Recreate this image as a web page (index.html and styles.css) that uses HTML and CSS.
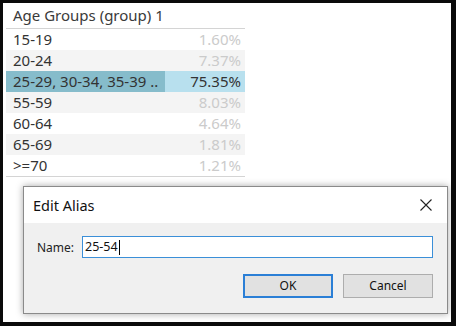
FILE: index.html
```html
<!DOCTYPE html>
<html>
<head>
<meta charset="utf-8">
<link rel="stylesheet" href="styles.css">
</head>
<body>
<div class="frame">
  <div class="table">
    <div class="head">Age Groups (group) 1</div>
    <div class="row"><span class="name">15-19</span><span class="pct">1.60%</span></div>
    <div class="row alt"><span class="name">20-24</span><span class="pct">7.37%</span></div>
    <div class="row sel"><span class="name">25-29, 30-34, 35-39 ..</span><span class="pct">75.35%</span></div>
    <div class="row alt"><span class="name">55-59</span><span class="pct">8.03%</span></div>
    <div class="row"><span class="name">60-64</span><span class="pct">4.64%</span></div>
    <div class="row alt"><span class="name">65-69</span><span class="pct">1.81%</span></div>
    <div class="row"><span class="name">&gt;=70</span><span class="pct">1.21%</span></div>
  </div>

  <div class="dialog">
    <div class="titlebar">
      <span class="title">Edit Alias</span>
      <svg class="close" width="12" height="12" viewBox="0 0 12 12"><path d="M0.5 0.5 L11.5 11.5 M11.5 0.5 L0.5 11.5" stroke="#222" stroke-width="1.1" fill="none"/></svg>
    </div>
    <div class="body">
      <div class="field">
        <span class="label">Name:</span>
        <div class="input">25-54<span class="caret"></span></div>
      </div>
      <div class="buttons">
        <div class="btn ok">OK</div>
        <div class="btn">Cancel</div>
      </div>
    </div>
  </div>
</div>
</body>
</html>
```

FILE: styles.css
```css
html, body {
  margin: 0;
  padding: 0;
  background: #000;
}
.frame {
  position: relative;
  width: 456px;
  height: 326px;
  box-sizing: border-box;
  border-style: solid;
  border-color: #0a0a0a;
  border-width: 3px 5px 4px 3px;
  background: #fff;
  overflow: hidden;
  font-family: "Noto Sans", "Open Sans", sans-serif;
}
.table {
  margin-left: 3px;
  width: 239px;
  border-bottom: 1px solid #d4d4d4;
  color: #333;
  font-size: 15px;
}
.head {
  height: 25px;
  line-height: 25px;
  padding-left: 7px;
  border-bottom: 1px solid #d4d4d4;
  color: #3a3a3a;
}
.row {
  display: flex;
  height: 21px;
  line-height: 21px;
}
.row.alt {
  background: #f4f4f4;
}
.name {
  width: 159px;
  box-sizing: border-box;
  padding-left: 7px;
  white-space: nowrap;
}
.pct {
  flex: 1;
  text-align: right;
  padding-right: 4px;
  color: #cbcbcb;
}
.row.sel .name {
  background: #86bccb;
}
.row.sel .pct {
  background: #b8e0ee;
  color: #333;
}
.dialog {
  position: absolute;
  left: 20px;
  top: 183px;
  width: 425px;
  height: 128px;
  box-sizing: border-box;
  border: 1px solid #8a8a8a;
  box-shadow: 0 0 7px rgba(0, 0, 0, 0.35);
  background: #f0f0f0;
  display: flex;
  flex-direction: column;
  font-family: "Noto Sans", "Open Sans", sans-serif;
  color: #111;
}
.titlebar {
  height: 36px;
  background: #fff;
  display: flex;
  align-items: center;
  justify-content: space-between;
  padding: 0 15px 0 9px;
}
.title {
  font-size: 14.5px;
  color: #111;
}
.close {
  display: block;
}
.body {
  flex: 1;
  padding: 13px 14px 0 13px;
}
.field {
  display: flex;
  align-items: center;
  height: 22px;
}
.label {
  width: 45px;
  font-size: 12px;
  color: #222;
}
.input {
  flex: 1;
  height: 22px;
  box-sizing: border-box;
  border: 1px solid #3b8fd8;
  background: #fff;
  font-size: 12.5px;
  line-height: 20px;
  padding-left: 2px;
  color: #111;
  display: flex;
  align-items: center;
}
.caret {
  display: inline-block;
  width: 1px;
  height: 15px;
  background: #000;
  margin-left: 1px;
}
.buttons {
  display: flex;
  justify-content: flex-end;
  gap: 10px;
  margin-top: 16px;
}
.btn {
  width: 90px;
  height: 24px;
  box-sizing: border-box;
  border: 1px solid #adadad;
  background: #e1e1e1;
  font-size: 12px;
  line-height: 22px;
  text-align: center;
  color: #111;
}
.btn.ok {
  border: 2px solid #2b7fd6;
  line-height: 20px;
}
```
